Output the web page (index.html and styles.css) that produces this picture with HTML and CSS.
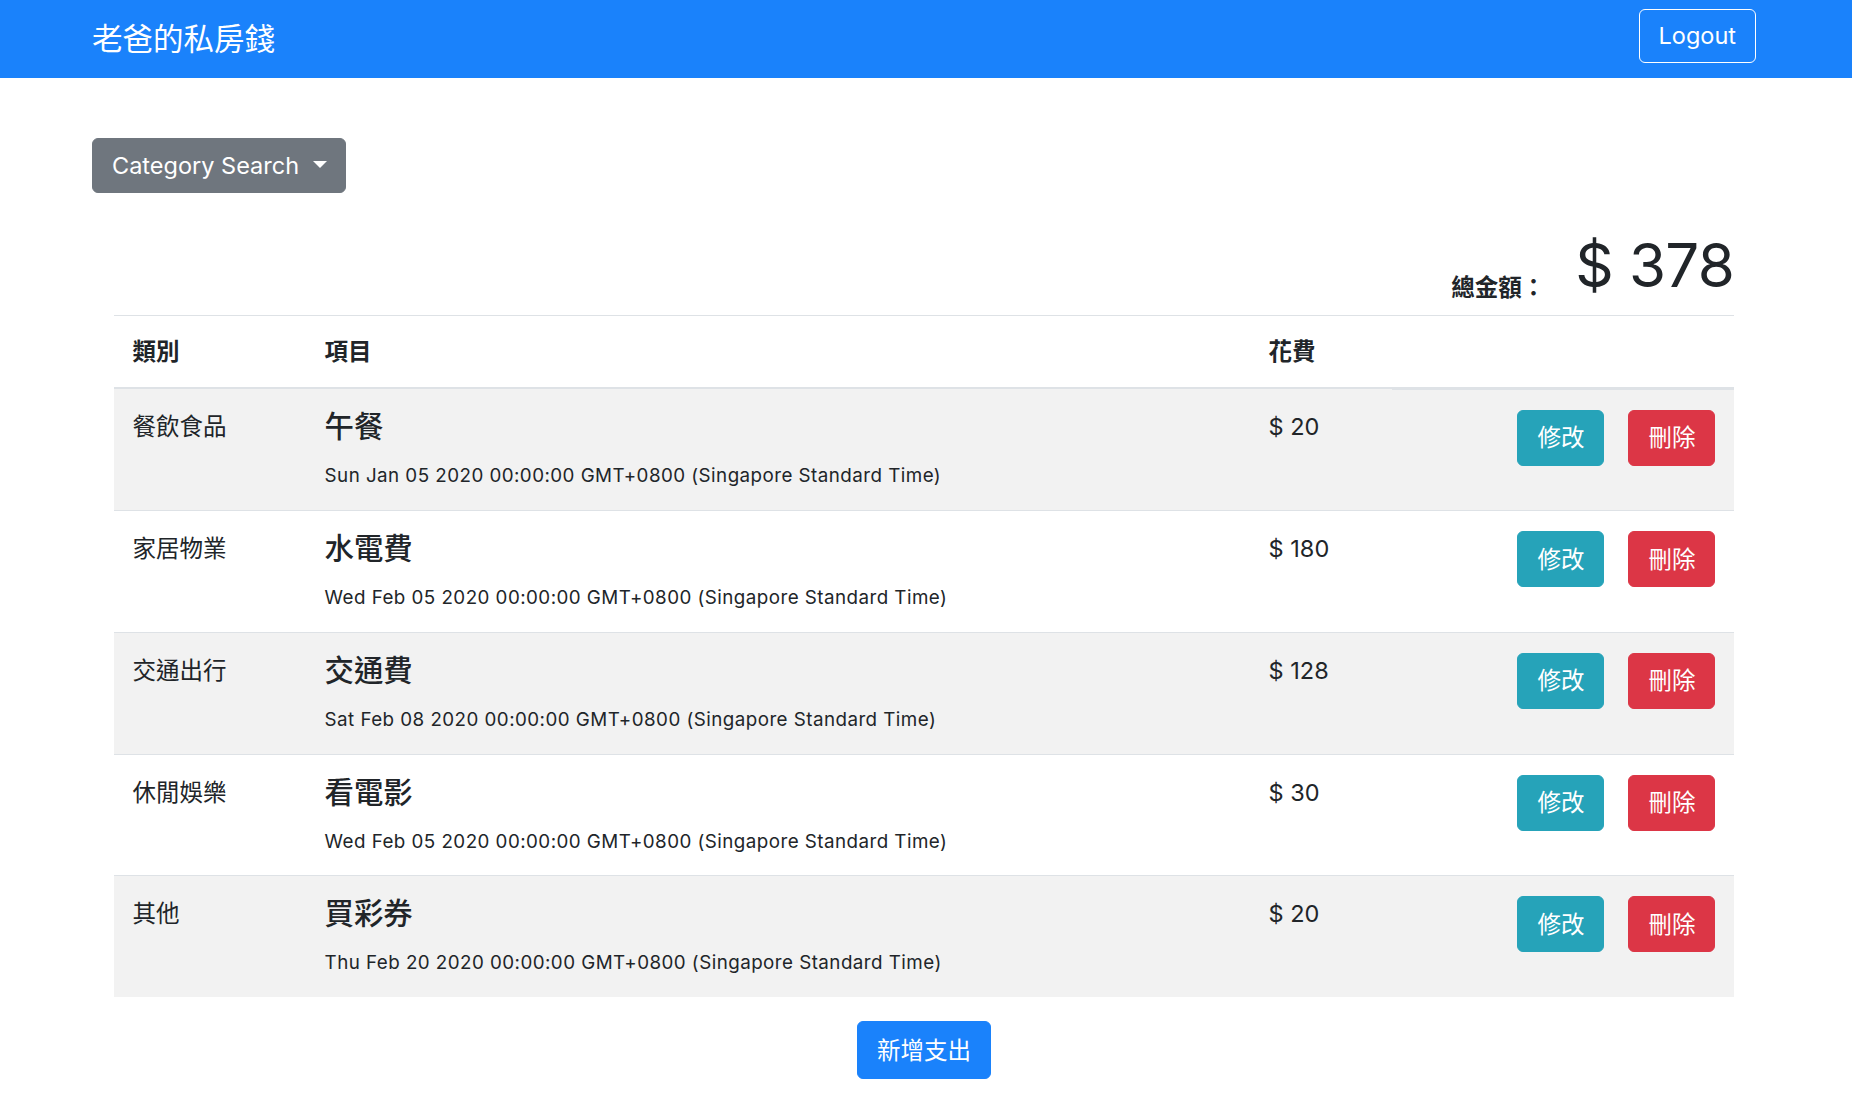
FILE: index.html
```html
<!DOCTYPE html>
<html lang="zh-Hant">
<head>
<meta charset="utf-8">
<title>老爸的私房錢</title>
<link rel="stylesheet" href="styles.css">
</head>
<body>
<nav class="navbar">
  <span class="brand">老爸的私房錢</span>
  <button class="btn btn-outline-light">Logout</button>
</nav>
<main class="content">
  <button class="btn btn-secondary dropdown-toggle">Category Search</button>
  <section class="records">
    <div class="total">
      <span class="total-label">總金額：</span>
      <span class="total-value">$ 378</span>
    </div>
    <table class="table">
      <colgroup>
        <col class="col-cat">
        <col class="col-item">
        <col class="col-amount">
        <col class="col-actions">
      </colgroup>
      <thead>
        <tr><th>類別</th><th>項目</th><th>花費</th><th class="th-actions"></th></tr>
      </thead>
      <tbody>
        <tr>
          <td>餐飲食品</td>
          <td><h5 class="item-title">午餐</h5><div class="item-date"><small>Sun Jan 05 2020 00:00:00 GMT+0800 (Singapore Standard Time)</small></div></td>
          <td>$ 20</td>
          <td><div class="actions"><button class="btn btn-info">修改</button><button class="btn btn-danger">刪除</button></div></td>
        </tr>
        <tr>
          <td>家居物業</td>
          <td><h5 class="item-title">水電費</h5><div class="item-date"><small>Wed Feb 05 2020 00:00:00 GMT+0800 (Singapore Standard Time)</small></div></td>
          <td>$ 180</td>
          <td><div class="actions"><button class="btn btn-info">修改</button><button class="btn btn-danger">刪除</button></div></td>
        </tr>
        <tr>
          <td>交通出行</td>
          <td><h5 class="item-title">交通費</h5><div class="item-date"><small>Sat Feb 08 2020 00:00:00 GMT+0800 (Singapore Standard Time)</small></div></td>
          <td>$ 128</td>
          <td><div class="actions"><button class="btn btn-info">修改</button><button class="btn btn-danger">刪除</button></div></td>
        </tr>
        <tr>
          <td>休閒娛樂</td>
          <td><h5 class="item-title">看電影</h5><div class="item-date"><small>Wed Feb 05 2020 00:00:00 GMT+0800 (Singapore Standard Time)</small></div></td>
          <td>$ 30</td>
          <td><div class="actions"><button class="btn btn-info">修改</button><button class="btn btn-danger">刪除</button></div></td>
        </tr>
        <tr>
          <td>其他</td>
          <td><h5 class="item-title">買彩券</h5><div class="item-date"><small>Thu Feb 20 2020 00:00:00 GMT+0800 (Singapore Standard Time)</small></div></td>
          <td>$ 20</td>
          <td><div class="actions"><button class="btn btn-info">修改</button><button class="btn btn-danger">刪除</button></div></td>
        </tr>
      </tbody>
    </table>
    <div class="add-wrap">
      <button class="btn btn-primary">新增支出</button>
    </div>
  </section>
</main>
</body>
</html>
```
FILE: styles.css
```css
body {
  margin: 0;
  font-family: Inter, "Noto Sans CJK TC", sans-serif;
  font-size: 23.5px;
  line-height: 1.5;
  color: #212529;
  background: #fff;
}

.navbar {
  display: flex;
  justify-content: space-between;
  align-items: center;
  height: 78px;
  box-sizing: border-box;
  padding: 8px 96px 15px 92px;
  background: #1a82fb;
}

.brand {
  color: #fff;
  font-size: 30.5px;
  line-height: 55px;
  margin-top: 5px;
}

.btn {
  font-family: inherit;
  font-size: 23.5px;
  line-height: 35px;
  font-weight: 400;
  border: 1.5px solid transparent;
  border-radius: 6px;
  padding: 8.5px 19px;
  color: #fff;
  cursor: pointer;
}

.btn-outline-light {
  background: transparent;
  border-color: #fff;
}

.content {
  padding: 60px 96px 0 92px;
}

.btn-secondary {
  background: #6f767e;
  border-color: #6f767e;
  padding: 9px 18px 9px 19px;
}

.dropdown-toggle::after {
  content: "";
  display: inline-block;
  margin-left: 14px;
  vertical-align: 0.255em;
  border-top: 7px solid #fff;
  border-left: 7px solid transparent;
  border-right: 7px solid transparent;
}

.records {
  margin: 36px 22px 0 22px;
}

.total {
  display: flex;
  justify-content: flex-end;
  align-items: flex-end;
  margin-bottom: 13px;
}

.total-label {
  font-weight: 700;
  font-size: 23.5px;
  line-height: 35px;
  margin-right: 30px;
  margin-bottom: -3px;
}

.total-value {
  font-size: 60px;
  line-height: 73px;
  letter-spacing: -0.8px;
}

.table {
  width: 100%;
  border-collapse: collapse;
  table-layout: fixed;
}

.col-cat { width: 192px; }
.col-item { width: 944px; }
.col-amount { width: 142px; }
.col-actions { width: 342px; }

.table th,
.table td {
  padding: 20px 18.6px 18.5px;
  text-align: left;
  vertical-align: top;
  border-top: 1px solid #dee2e6;
}

.table thead th {
  font-weight: 700;
  padding-top: 18px;
  padding-bottom: 18px;
  border-bottom: 2px solid #dee2e6;
}

.table thead th.th-actions {
  border-bottom-width: 3px;
}

.table tbody tr:nth-child(odd) {
  background: #f2f2f2;
}

.item-title {
  margin: 0 0 12px;
  font-size: 29.4px;
  font-weight: 500;
  line-height: 35px;
}

.item-date small {
  font-size: 18.8px;
  letter-spacing: 0.45px;
}

.actions {
  display: flex;
  justify-content: flex-end;
  gap: 24px;
}

.actions .btn {
  padding-top: 9.5px;
  padding-bottom: 9.5px;
}

.btn-info {
  background: #26a3b9;
  border-color: #26a3b9;
}

.btn-danger {
  background: #dc3646;
  border-color: #dc3646;
}

.add-wrap {
  display: flex;
  justify-content: center;
  margin-top: 24px;
}

.btn-primary {
  background: #1a82fb;
  border-color: #1a82fb;
  padding: 10.5px 19px;
}
```
